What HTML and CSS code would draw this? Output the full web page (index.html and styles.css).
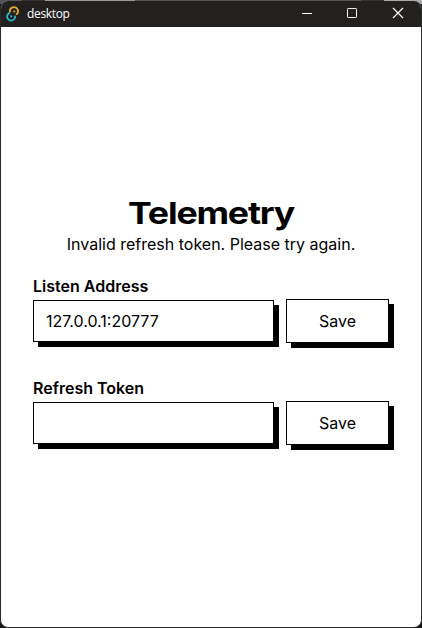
FILE: index.html
```
<!DOCTYPE html>
<html lang="en">
<head>
<meta charset="utf-8">
<title>desktop</title>
<link rel="stylesheet" href="styles.css">
</head>
<body>
<div class="window">
  <header class="titlebar">
    <svg class="logo" width="14" height="16" viewBox="0 0 14 16" fill="none" stroke-width="1.8">
      <path d="M4.1 6.2A4 4 0 1 1 10 8.6" stroke="#e9a92b"/>
      <path d="M4.2 6.7A4 4 0 1 0 9 9.6" stroke="#25b9c9"/>
      <circle cx="8.3" cy="5.5" r="1.1" fill="#e9a92b"/>
      <circle cx="5.3" cy="10.3" r="1.1" fill="#25b9c9"/>
    </svg>
    <span class="caption">desktop</span>
    <div class="controls">
      <svg width="46" height="26" viewBox="0 0 46 26" stroke="#fff"><path d="M18 12.5h10"/></svg>
      <svg width="46" height="26" viewBox="0 0 46 26" fill="none" stroke="#fff"><rect x="17.5" y="7.5" width="9" height="9" rx=".7"/></svg>
      <svg width="46" height="26" viewBox="0 0 46 26" stroke="#fff" stroke-width="1.2"><path d="M17 7l10 10M27 7l-10 10"/></svg>
    </div>
  </header>
  <main class="content">
    <h1 class="title"><span class="wide">Telemetry</span></h1>
    <p class="message">Invalid refresh token. Please try again.</p>
    <form class="field">
      <label class="label" for="address">Listen Address</label>
      <div class="row">
        <input class="input" id="address" type="text" value="127.0.0.1:20777">
        <button class="button" type="button">Save</button>
      </div>
    </form>
    <form class="field">
      <label class="label" for="token">Refresh Token</label>
      <div class="row">
        <input class="input" id="token" type="text">
        <button class="button" type="button">Save</button>
      </div>
    </form>
  </main>
</div>
</body>
</html>
```
FILE: styles.css
```
* { box-sizing: border-box; }
body {
  margin: 0;
  height: 628px;
  overflow: hidden;
  background: linear-gradient(90deg, #555 0 22px, #333 22px 45px, #999 45px 135px, #555 135px 361px, #333 361px 384px, #aaa 384px) 0 0 / 100% 4px no-repeat #151515;
  font-family: Inter, sans-serif;
  font-size: 16px;
  line-height: 24px;
  color: #000;
}
.window {
  display: flex;
  flex-direction: column;
  height: 627px;
  margin-top: 1px;
  border: solid #2b2b2b;
  border-width: 0 1px 1px;
  border-radius: 8px;
  overflow: hidden;
  background: #fff;
}
.titlebar {
  display: flex;
  flex: none;
  align-items: center;
  height: 26px;
  padding-left: 5px;
  background: #22211f;
}
.logo { flex: none; margin-top: -1px; }
.caption {
  margin-left: 7px;
  color: #fff;
  font: 12px/16px "Open Sans", sans-serif;
  letter-spacing: -0.35px;
}
.controls { display: flex; margin: 0 -1px 0 auto; }
.content { padding: 167px 32px 0; }
.title {
  margin: 0;
  text-align: center;
  font-size: 30.5px;
  font-weight: 750;
  line-height: 38px;
  letter-spacing: -1px;
}
.wide { display: inline-block; transform: scaleX(1.17); }
.message { margin: 0; text-align: center; }
.field { margin-top: 18px; }
.field + .field { margin-top: 33px; }
.label { display: block; font-weight: 600; }
.row { display: flex; align-items: center; gap: 12px; margin-top: 1px; }
.input, .button {
  border: 1px solid #000;
  border-radius: 0;
  background: #fff;
  box-shadow: 5px 5px 0 #000;
  color: #000;
  font: inherit;
}
.input { width: 241px; height: 42px; padding: 0 12px; outline: none; }
.button { width: 103px; height: 44px; padding: 0; }
```
